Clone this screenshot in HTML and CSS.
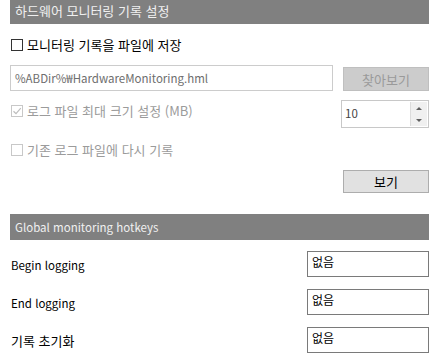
FILE: index.html
```html
<!DOCTYPE html>
<html lang="ko">
<head>
  <meta charset="UTF-8" />
  <title>하드웨어 모니터링 기록 설정</title>
  <link rel="stylesheet" href="styles.css">
</head>
<body>
  <div class="panel">
    <div class="section-title first ko">하드웨어 모니터링 기록 설정</div>

    <label class="check-row save-row ko">
      <span class="box"></span>
      <span>모니터링 기록을 파일에 저장</span>
    </label>

    <div class="path-row">
      <div class="path-input">%ABDir%₩HardwareMonitoring.hml</div>
      <button class="btn disabled ko">찾아보기</button>
    </div>

    <div class="size-row">
      <label class="check-row disabled ko">
        <span class="box checked">
          <svg width="10" height="10" viewBox="0 0 10 10"><path d="M1.5 5.2 L4 7.6 L8.8 2.2" fill="none" stroke="#bdbdbd" stroke-width="1.2"/></svg>
        </span>
        <span>로그 파일 최대 크기 설정 (MB)</span>
      </label>
      <div class="spin">
        <span class="spin-value">10</span>
        <span class="spin-arrows">
          <span class="arrow up"></span>
          <span class="arrow down"></span>
        </span>
      </div>
    </div>

    <label class="check-row disabled append-row ko">
      <span class="box"></span>
      <span>기존 로그 파일에 다시 기록</span>
    </label>

    <div class="btn-row">
      <button class="btn ko">보기</button>
    </div>

    <div class="section-title">Global monitoring hotkeys</div>

    <div class="hotkeys">
      <div class="hotkey">
        <span class="hotkey-label">Begin logging</span>
        <span class="hotkey-box">없음</span>
      </div>
      <div class="hotkey">
        <span class="hotkey-label">End logging</span>
        <span class="hotkey-box">없음</span>
      </div>
      <div class="hotkey">
        <span class="hotkey-label ko">기록 초기화</span>
        <span class="hotkey-box">없음</span>
      </div>
    </div>
  </div>
</body>
</html>
```

FILE: styles.css
```css
body {
  margin: 0;
  background: #ffffff;
  color: #000000;
  font-family: "Noto Sans CJK KR", "Noto Sans", sans-serif;
  font-size: 11.5px;
  overflow: hidden;
}
.ko {
  font-size: 13px;
}
.panel {
  padding: 0 10px;
  display: flex;
  flex-direction: column;
}
.section-title {
  height: 26px;
  line-height: 26px;
  background: #808080;
  color: #f0f0f0;
  padding-left: 5px;
  margin-top: 21px;
  font-size: 11.5px;
}
.section-title.first {
  margin-top: -2px;
  font-size: 13px;
}
.check-row {
  display: flex;
  align-items: center;
  gap: 4px;
  height: 20px;
  line-height: 20px;
  padding-left: 1px;
}
.check-row.disabled {
  color: #9b9b9b;
}
.box {
  width: 10px;
  height: 10px;
  border: 1px solid #333333;
  background: #ffffff;
  display: flex;
  align-items: center;
  justify-content: center;
}
.check-row.disabled .box {
  border-color: #c8c8c8;
}
.save-row {
  margin-top: 11px;
}
.path-row {
  margin-top: 10px;
  display: flex;
  align-items: flex-end;
  gap: 10px;
}
.path-input {
  flex: 1;
  height: 24px;
  line-height: 24px;
  border: 1px solid #cccccc;
  padding-left: 4px;
  color: #6e6e6e;
}
.btn {
  width: 86px;
  height: 24px;
  border: 1px solid #adadad;
  background: #e1e1e1;
  font-family: inherit;
  color: #000000;
  padding: 0;
}
.btn.disabled {
  background: #cccccc;
  border-color: #bfbfbf;
  color: #9a9a9a;
}
.size-row {
  margin-top: 9px;
  display: flex;
  align-items: flex-start;
  justify-content: space-between;
}
.size-row .check-row {
  margin-top: 1px;
}
.spin {
  width: 86px;
  height: 26px;
  border: 1px solid #c8c8c8;
  display: flex;
}
.spin-value {
  flex: 1;
  padding-left: 3px;
  line-height: 24px;
  color: #444444;
}
.spin-arrows {
  width: 16px;
  margin: 1px;
  background: #f0f0f0;
  border-left: 1px solid #dcdcdc;
  display: flex;
  flex-direction: column;
  justify-content: space-around;
  align-items: center;
}
.arrow {
  width: 0;
  height: 0;
  border-left: 3px solid transparent;
  border-right: 3px solid transparent;
}
.arrow.up {
  border-bottom: 3px solid #606060;
}
.arrow.down {
  border-top: 3px solid #606060;
}
.append-row {
  margin-top: 12px;
}
.btn-row {
  margin-top: 10px;
  display: flex;
  justify-content: flex-end;
}
.btn-row .btn {
  height: 23px;
}
.hotkeys {
  margin-top: 11px;
  display: flex;
  flex-direction: column;
  gap: 12px;
}
.hotkey {
  display: flex;
  justify-content: space-between;
  align-items: center;
}
.hotkey-label {
  padding-left: 1px;
  padding-top: 2px;
}
.hotkey-label.ko {
  padding-top: 0;
}
.hotkey-box {
  width: 116px;
  height: 24px;
  border: 1px solid #7a7a7a;
  padding-left: 4px;
  line-height: 20px;
  font-size: 12px;
}
```
